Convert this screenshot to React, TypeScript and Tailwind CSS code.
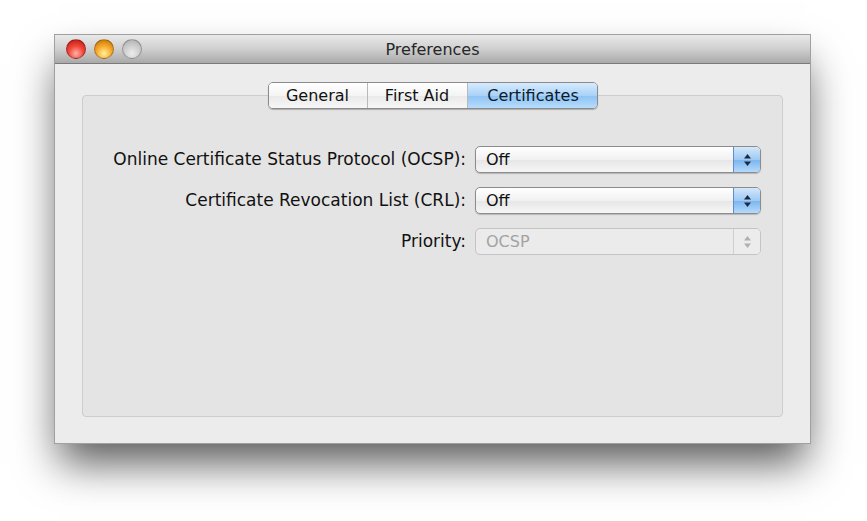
import type { ReactNode } from "react";

const font = "font-['DejaVu_Sans','Liberation_Sans',sans-serif]";

function TrafficLight({ color }: { color: string }) {
  return <span className={`block h-[20px] w-[20px] rounded-full border border-black/25 ${color}`} />;
}

function Stepper({ disabled }: { disabled?: boolean }) {
  return (
    <svg width="9" height="14" viewBox="0 0 9 14">
      <path d="M4.5 1 L8 5.5 H1 Z" fill={disabled ? "#b0b0b0" : "#1b2a40"} />
      <path d="M4.5 13 L8 8.5 H1 Z" fill={disabled ? "#b0b0b0" : "#1b2a40"} />
    </svg>
  );
}

function Popup({ value, disabled }: { value: string; disabled?: boolean }) {
  return (
    <div
      className={`flex h-[27px] w-[286px] items-stretch overflow-hidden rounded-[5px] border ${
        disabled
          ? "border-[#c4c4c4] bg-[#ebebeb]"
          : "border-[#8c8c8c] bg-[linear-gradient(#ffffff,#f1f1f1_50%,#e6e6e6_51%,#f6f6f6)] shadow-[0_1px_1px_rgba(0,0,0,0.2)]"
      }`}
    >
      <span className={`flex-1 pl-[10px] text-[16px] leading-[25px] ${disabled ? "text-[#a3a3a3]" : "text-[#111]"}`}>{value}</span>
      <span
        className={`flex w-[27px] items-center justify-center border-l ${
          disabled
            ? "border-[#cfcfcf] bg-[#ececec]"
            : "border-[#5d8fd0] bg-[linear-gradient(#d3e7fb,#9fcaf3_50%,#7ab4ee_51%,#b5dafc)]"
        }`}
      >
        <Stepper disabled={disabled} />
      </span>
    </div>
  );
}

function Row({ label, children }: { label: string; children: ReactNode }) {
  return (
    <div className="flex items-center gap-[9px]">
      <span className="w-[383px] text-right text-[17px] text-[#111]">{label}</span>
      {children}
    </div>
  );
}

function Tab({ label, active, last }: { label: string; active?: boolean; last?: boolean }) {
  return (
    <span
      className={`flex h-full items-center justify-center ${last ? "" : "border-r border-[#b9b9b9]"} ${
        active
          ? "bg-[linear-gradient(#d7ebfd,#a9d2f8_50%,#8dc3f5_51%,#b7dcfb)] text-[#0e1a2a]"
          : "bg-[linear-gradient(#ffffff,#f4f4f4_50%,#e9e9e9_51%,#f7f7f7)] text-[#111]"
      }`}
    >
      {label}
    </span>
  );
}

export default function App() {
  return (
    <div className={`h-[521px] w-[867px] overflow-hidden bg-white pl-[55px] pt-[35px] ${font}`}>
      <div className="flex h-[408px] w-[755px] flex-col bg-[#ececec] shadow-[0_24px_40px_-4px_rgba(0,0,0,0.65)] outline outline-1 outline-[#a0a0a0]">
        <div className="relative flex h-[29px] items-center border-b border-[#7a7a7a] bg-[linear-gradient(#e9e9e9,#cfcfcf_50%,#a9a9a9)] px-[11px]">
          <div className="flex gap-[8px]">
            <TrafficLight color="bg-[radial-gradient(circle_at_50%_75%,#ffb3a8_0%,#f2483a_45%,#b3120c_100%)]" />
            <TrafficLight color="bg-[radial-gradient(circle_at_50%_75%,#fff1a0_0%,#f7ac2c_45%,#b86a00_100%)]" />
            <TrafficLight color="bg-[radial-gradient(circle_at_50%_75%,#ececec_0%,#cdcdcd_50%,#a9a9a9_100%)] border-black/10" />
          </div>
          <span className="absolute inset-x-0 pt-[2px] text-center text-[16px] text-[#262626]">Preferences</span>
        </div>

        <div className="flex flex-1 flex-col px-[27px] pt-[18px] pb-[26px]">
          <div className="relative z-10 mx-auto grid h-[27px] w-[330px] grid-cols-[99px_100px_131px] overflow-hidden rounded-[5px] border border-[#8a8a8a] text-[16px] shadow-[0_1px_1px_rgba(0,0,0,0.25)]">
            <Tab label="General" />
            <Tab label="First Aid" />
            <Tab label="Certificates" active last />
          </div>
          <div className="-mt-[14px] flex flex-1 flex-col gap-[14px] rounded-[4px] border border-[#cdcdcd] bg-[#e4e4e4] pt-[50px]">
            <Row label="Online Certificate Status Protocol (OCSP):">
              <Popup value="Off" />
            </Row>
            <Row label="Certificate Revocation List (CRL):">
              <Popup value="Off" />
            </Row>
            <Row label="Priority:">
              <Popup value="OCSP" disabled />
            </Row>
          </div>
        </div>
      </div>
    </div>
  );
}
